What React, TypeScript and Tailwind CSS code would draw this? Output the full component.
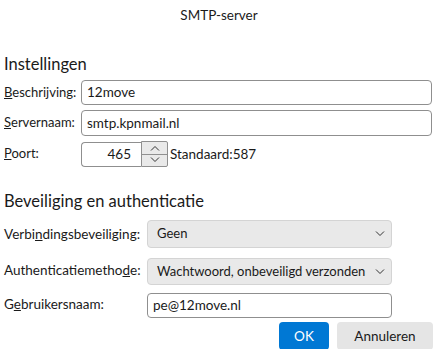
import React from 'react'

const font = { fontFamily: 'Lato, "Noto Sans", sans-serif' }

const Chevron = ({ up = false }: { up?: boolean }) => (
  <svg width="10" height="6" viewBox="0 0 10 6" className="block shrink-0">
    <path
      d={up ? 'M1 5.5 L5 1.5 L9 5.5' : 'M1 0.5 L5 4.5 L9 0.5'}
      fill="none"
      stroke="#333"
      strokeWidth="1"
    />
  </svg>
)

const Field = ({ value }: { value: string }) => (
  <div className="flex-1 h-full border border-[#8f8f8f] rounded-[4px] bg-white flex items-center px-[5px] text-[13.5px] text-[#1a1a1a]">
    {value}
  </div>
)

const Select = ({ value, h }: { value: string; h: string }) => (
  <div className={`w-[245px] ${h} rounded-[4px] border border-[#d4d4d4] bg-[#e9e9e9] flex items-center justify-between gap-[3px] pl-[9px] pr-[6px] text-[13px] text-[#1a1a1a]`}>
    <span>{value}</span>
    <Chevron />
  </div>
)

export default function App() {
  return (
    <div className="w-[438px] h-[349px] overflow-hidden bg-white text-[#1a1a1a] whitespace-nowrap" style={font}>
      <div className="pt-[5px] h-[25px] leading-[20px] text-center text-[13.5px]">SMTP-server</div>

      <div className="mt-[29px] px-[4px] text-[16.5px] leading-[20px]">Instellingen</div>

      <div className="mt-[6px] flex flex-col gap-[5px] pl-[4px] pr-[6px] text-[13px]">
        <div className="flex items-center h-[25px]">
          <div className="w-[77px]"><span className="underline">B</span>eschrijving:</div>
          <Field value="12move" />
        </div>
        <div className="flex items-center h-[26px]">
          <div className="w-[77px]"><span className="underline">S</span>ervernaam:</div>
          <Field value="smtp.kpnmail.nl" />
        </div>
        <div className="flex items-center h-[26px]">
          <div className="w-[77px]"><span className="underline">P</span>oort:</div>
          <div className="w-[60px] h-[25px] border border-[#8f8f8f] rounded-l-[4px] border-r-0 bg-white flex items-center justify-end pr-[10px] text-[13.5px]">465</div>
          <div className="w-[27px] h-[26px] border border-[#8f8f8f] rounded-r-[2px] bg-[#e9e9e9] flex flex-col">
            <div className="flex-1 flex items-center justify-center border-b border-[#8f8f8f]"><Chevron up /></div>
            <div className="flex-1 flex items-center justify-center"><Chevron /></div>
          </div>
          <div className="ml-[2px] text-[13.5px]">Standaard:587</div>
        </div>
      </div>

      <div className="mt-[24px] px-[4px] text-[16.5px] leading-[20px]">Beveiliging en authenticatie</div>

      <div className="mt-[9px] flex flex-col pl-[4px] text-[13.5px]">
        <div className="flex items-center">
          <div className="w-[143px]">Verbi<span className="underline">n</span>dingsbeveiliging:</div>
          <Select value="Geen" h="h-[28px]" />
        </div>
        <div className="flex items-center mt-[10px]">
          <div className="w-[143px] -mt-[2px]">Authenticatiemetho<span className="underline">d</span>e:</div>
          <Select value="Wachtwoord, onbeveiligd verzonden" h="h-[27px]" />
        </div>
        <div className="flex items-center mt-[8px] h-[25px]">
          <div className="w-[143px] -mt-[2px]">G<span className="underline">e</span>bruikersnaam:</div>
          <div className="w-[245px] h-full flex">
            <Field value="pe@12move.nl" />
          </div>
        </div>
      </div>

      <div className="mt-[4px] flex justify-end gap-[8px] pr-[5px] text-[13.5px]">
        <div className="w-[50px] h-[28px] rounded-[4px] bg-[#0078d4] text-white flex items-center justify-center">OK</div>
        <div className="w-[96px] h-[28px] rounded-[4px] bg-[#e5e5e5] flex items-center justify-center">Annuleren</div>
      </div>
    </div>
  )
}
